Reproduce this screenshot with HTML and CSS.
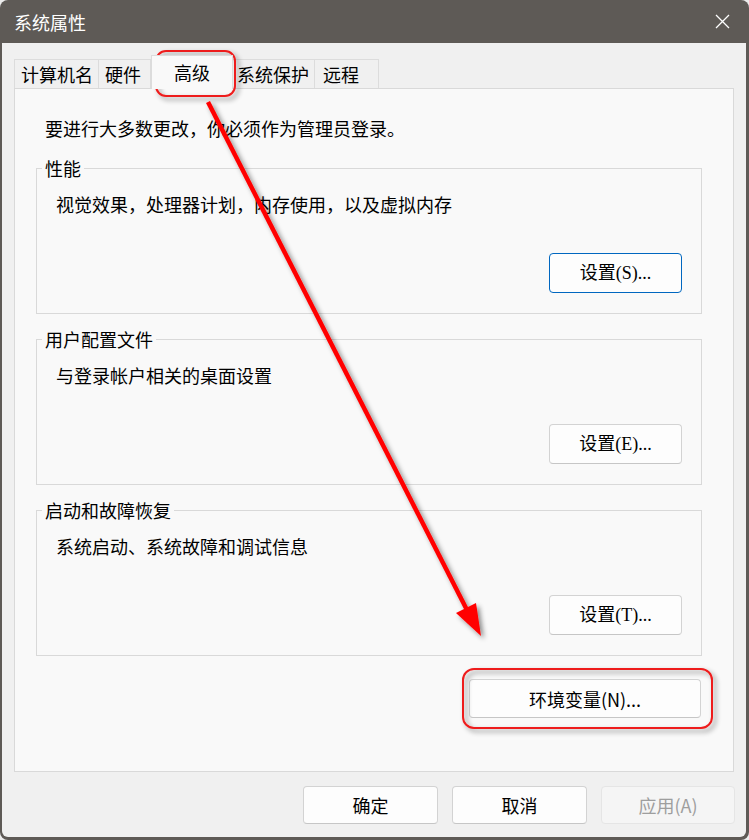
FILE: index.html
```html
<!DOCTYPE html>
<html lang="zh-CN">
<head>
<meta charset="utf-8">
<title>系统属性</title>
<link rel="stylesheet" href="styles.css">
</head>
<body>
<div class="window">
  <div class="titlebar">
    <span class="title">系统属性</span>
    <svg class="close" width="15" height="15" viewBox="0 0 15 15"><path d="M1 1L14 14M14 1L1 14" stroke="#ffffff" stroke-width="1.3" fill="none"/></svg>
  </div>
  <div class="content">
    <div class="tabs">
      <div class="tab tab-1">计算机名</div>
      <div class="tab tab-2">硬件</div>
      <div class="tab tab-active">高级</div>
      <div class="tab tab-4">系统保护</div>
      <div class="tab tab-5">远程</div>
    </div>
    <div class="panel">
      <p class="intro">要进行大多数更改，你必须作为管理员登录。</p>
      <fieldset class="group">
        <legend>性能</legend>
        <p class="desc">视觉效果，处理器计划，内存使用，以及虚拟内存</p>
        <div class="actions"><button class="btn btn-set btn-focus">设置(S)...</button></div>
      </fieldset>
      <fieldset class="group">
        <legend>用户配置文件</legend>
        <p class="desc">与登录帐户相关的桌面设置</p>
        <div class="actions"><button class="btn btn-set">设置(E)...</button></div>
      </fieldset>
      <fieldset class="group">
        <legend>启动和故障恢复</legend>
        <p class="desc">系统启动、系统故障和调试信息</p>
        <div class="actions"><button class="btn btn-set">设置(T)...</button></div>
      </fieldset>
      <div class="env-row"><button class="btn btn-env">环境变量(N)...</button></div>
    </div>
    <div class="footer">
      <button class="btn btn-foot">确定</button>
      <button class="btn btn-foot">取消</button>
      <button class="btn btn-foot btn-apply">应用(A)</button>
    </div>
  </div>
  <svg class="annotations" width="749" height="840" viewBox="0 0 749 840">
    <defs>
      <filter id="sh" filterUnits="userSpaceOnUse" x="0" y="0" width="749" height="840">
        <feDropShadow dx="3" dy="3" stdDeviation="2.5" flood-color="#000000" flood-opacity="0.45"/>
      </filter>
    </defs>
    <g filter="url(#sh)">
      <rect x="156" y="51" width="79" height="45" rx="10" fill="none" stroke="#ee1c1c" stroke-width="2"/>
      <rect x="463" y="669" width="249" height="59" rx="11" fill="none" stroke="#ee1c1c" stroke-width="2"/>
      <line x1="208" y1="102" x2="467" y2="610" stroke="#ff0000" stroke-width="4.5"/>
      <polygon points="481,636 456,613 476,603" fill="#ff0000"/>
    </g>
  </svg>
</div>
</body>
</html>
```

FILE: styles.css
```css
* { box-sizing: border-box; }
html, body { margin: 0; padding: 0; }
html { background: #ececec; }
body {
  font-family: "Noto Sans CJK SC", sans-serif;
  color: #000;
  font-size: 18px;
}
.window {
  position: relative;
  width: 749px;
  height: 840px;
  background: #5e5a56;
  border-radius: 8px;
  padding: 0 3px 3px 2px;
  display: flex;
  flex-direction: column;
}
.titlebar {
  height: 43px;
  display: flex;
  align-items: center;
  justify-content: space-between;
  padding: 0 16px 0 12px;
  color: #fff;
  font-size: 18px;
  line-height: 24px;
}
.close { display: block; }
.content {
  flex: 1;
  background: #f0f0f0;
  border-radius: 0 0 6px 6px;
  padding: 12px 12px 13px 12px;
  display: flex;
  flex-direction: column;
}
.tabs {
  display: flex;
  align-items: flex-end;
  margin-bottom: -1px;
  font-size: 18px;
}
.tab {
  height: 30px;
  line-height: 28px;
  border-top: 1px solid #dcdcdc;
  border-right: 1px solid #dcdcdc;
  border-bottom: 1px solid #d9d9d9;
  background: #f0f0f0;
  white-space: nowrap;
}
.tab-1 { border-left: 1px solid #dcdcdc; padding: 0 5px 0 6px; }
.tab-2 { padding: 0 9px 0 6px; }
.tab-active {
  position: relative;
  z-index: 1;
  height: 34px;
  line-height: 24px;
  padding: 4px 22px 0 22px;
  border-left: 1px solid #dcdcdc;
  border-bottom: none;
  background: #f9f9f9;
}
.tab-4 { padding: 0 5px 0 4px; }
.tab-5 { padding: 0 19px 0 8px; }
.panel {
  flex: 1;
  border: 1px solid #d9d9d9;
  background: #f9f9f9;
  padding: 27px 31px 0 21px;
  display: flex;
  flex-direction: column;
}
.intro {
  margin: 0 0 0 9px;
  line-height: 24px;
}
.group {
  margin: 16px 0 0;
  border: 1px solid #d9d9d9;
  padding: 12px 19px 20px 5px;
  min-width: 0;
}
.group + .group { margin-top: 13px; }
.group legend {
  padding: 0 3px;
  line-height: 24px;
}
.desc {
  margin: 0 0 0 14px;
  line-height: 24px;
}
.actions {
  display: flex;
  justify-content: flex-end;
  margin-top: 37px;
}
.btn {
  font-family: "Noto Sans CJK SC", sans-serif;
  font-size: 18px;
  color: #000;
  background: #fdfdfd;
  border: 1px solid #d3d3d3;
  border-bottom-color: #c6c6c6;
  border-radius: 4px;
  padding: 0;
  line-height: 24px;
}
.btn-set {
  width: 133px;
  height: 40px;
  font-family: "Liberation Serif", "Noto Sans CJK SC", serif;
}
.btn-focus { border-color: #0067c0; }
.env-row {
  display: flex;
  justify-content: flex-end;
  margin-top: 23px;
  margin-right: 1px;
}
.btn-env { width: 232px; height: 39px; }
.footer {
  display: flex;
  justify-content: flex-end;
  gap: 14px;
  margin-top: 14px;
  margin-right: -1px;
}
.btn-foot { width: 135px; height: 38px; }
.btn-apply {
  width: 134px;
  background: #f5f5f5;
  border-color: #e5e5e5;
  color: #9e9e9e;
}
.annotations {
  position: absolute;
  left: 0;
  top: 0;
  pointer-events: none;
}
```
